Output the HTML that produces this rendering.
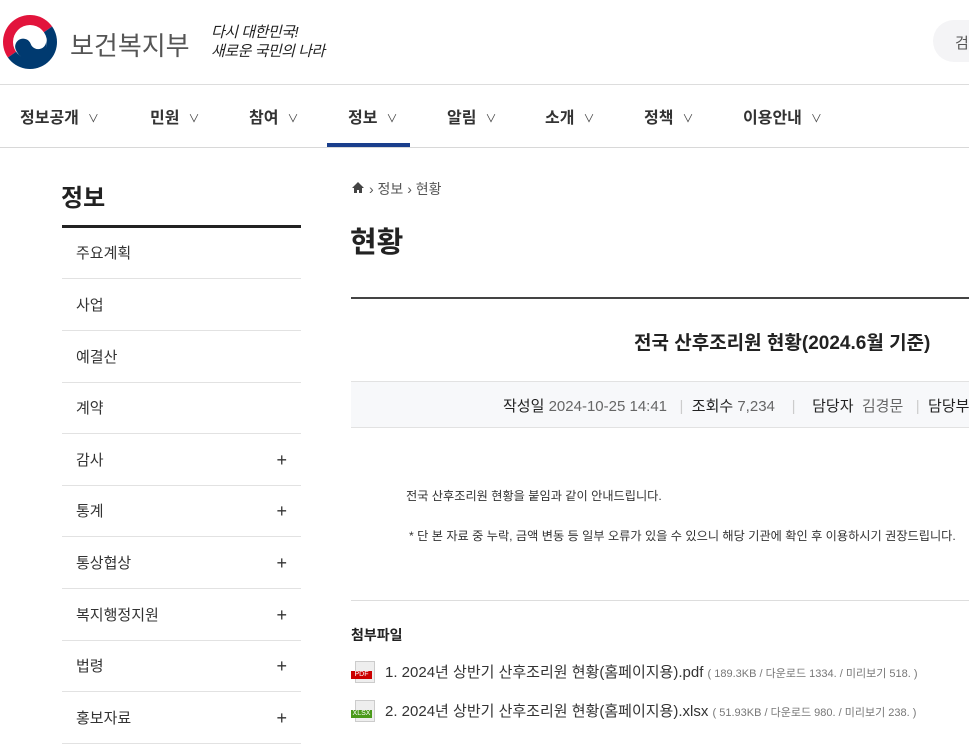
<!DOCTYPE html>
<html><head><meta charset="utf-8"><style>
*{margin:0;padding:0;box-sizing:border-box}
body{width:969px;height:739px;overflow:hidden;background:#fff;font-family:"Liberation Sans","Noto Sans CJK KR",sans-serif;color:#222;position:relative}
.a{position:absolute;white-space:nowrap}
.nav span{position:absolute;top:104px;font-size:16px;font-weight:bold;color:#333}
.nav i{font-style:normal;font-weight:normal;font-size:11px;margin-left:9px;color:#444;position:relative;top:-1px}
.side div{position:absolute;left:62px;width:239px;height:52px;border-bottom:1px solid #e2e2e2;font-size:15px;color:#333;padding:0 0 0 14px;line-height:53px}
.side b{position:absolute;right:14px;font-weight:normal;font-size:18px}
</style></head><body>
<svg class="a" style="left:2px;top:14px" width="56" height="56" viewBox="0 0 56 56">
<g transform="rotate(-35 28 28)">
<path d="M1 28A27 27 0 0 1 55 28Z" fill="#e2143c"/>
<path d="M1 28A27 27 0 0 0 55 28Z" fill="#003a70"/>
</g>
<circle cx="28" cy="28" r="17" fill="#fff"/>
<path d="M12 30A8 8 0 0 1 28 30A8 8 0 0 0 44 30A16 16 0 0 1 12 30Z" fill="#003a70" transform="rotate(-20 28 28)"/>
</svg>
<div class="a" style="left:70px;top:26px;font-size:26px;color:#555">보건복지부</div>
<div class="a" style="left:211px;top:23px;font-size:15px;font-style:italic;line-height:19px;color:#222;letter-spacing:-0.5px">다시 대한민국!<br>새로운 국민의 나라</div>
<div class="a" style="left:933px;top:20px;width:60px;height:42px;border-radius:21px;background:#f4f4f6;font-size:15px;color:#555;padding:12px 0 0 22px">검</div>
<div class="a" style="left:0;top:84px;width:969px;height:1px;background:#ddd"></div>
<div class="nav">
<span style="left:20px">정보공개<i>∨</i></span>
<span style="left:150px">민원<i>∨</i></span>
<span style="left:249px">참여<i>∨</i></span>
<span style="left:348px">정보<i>∨</i></span>
<span style="left:447px">알림<i>∨</i></span>
<span style="left:545px">소개<i>∨</i></span>
<span style="left:644px">정책<i>∨</i></span>
<span style="left:743px">이용안내<i>∨</i></span>
</div>
<div class="a" style="left:327px;top:143px;width:83px;height:4px;background:#1a3e8c"></div>
<div class="a" style="left:0;top:147px;width:969px;height:1px;background:#d8d8d8"></div>
<div class="a" style="left:61px;top:178px;font-size:24px;font-weight:bold">정보</div>
<div class="a" style="left:62px;top:225px;width:239px;height:3px;background:#222"></div>
<div class="side">
<div style="top:227px">주요계획</div>
<div style="top:279px">사업</div>
<div style="top:331px">예결산</div>
<div style="top:382px">계약</div>
<div style="top:434px">감사<b>+</b></div>
<div style="top:485px">통계<b>+</b></div>
<div style="top:537px">통상협상<b>+</b></div>
<div style="top:589px">복지행정지원<b>+</b></div>
<div style="top:640px">법령<b>+</b></div>
<div style="top:692px">홍보자료<b>+</b></div>
</div>
<svg class="a" style="left:351px;top:181px" width="14" height="13" viewBox="0 0 14 13"><path d="M7 1L1 7H3V12H6V9H8V12H11V7H13Z" fill="#444"/></svg>
<div class="a" style="left:369px;top:179px;font-size:14px;color:#555">› 정보 › 현황</div>
<div class="a" style="left:350px;top:219px;font-size:29px;font-weight:bold">현황</div>
<div class="a" style="left:351px;top:297px;width:618px;height:2px;background:#444"></div>
<div class="a" style="left:634px;top:328px;font-size:19px;font-weight:bold">전국 산후조리원 현황(2024.6월 기준)</div>
<div class="a" style="left:351px;top:381px;width:618px;height:47px;background:#f7f8fa;border-top:1px solid #e2e2e2;border-bottom:1px solid #e2e2e2"></div>
<div class="a" style="left:503px;top:395px;font-size:15px;color:#222">작성일 <span style="color:#666">2024-10-25 14:41</span> <span style="color:#ccc">&nbsp;&nbsp;|&nbsp;&nbsp;</span>조회수 <span style="color:#666">7,234</span> <span style="color:#ccc">&nbsp;&nbsp;&nbsp;|&nbsp;&nbsp;&nbsp;</span> 담당자 <span style="color:#666">&nbsp;김경문</span> <span style="color:#ccc">&nbsp;&nbsp;|&nbsp;</span> 담당부서</div>
<div class="a" style="left:406px;top:486px;font-size:12.2px;color:#333">전국 산후조리원 현황을 붙임과 같이 안내드립니다.</div>
<div class="a" style="left:409px;top:526px;font-size:12.2px;color:#333">* 단 본 자료 중 누락, 금액 변동 등 일부 오류가 있을 수 있으니 해당 기관에 확인 후 이용하시기 권장드립니다.</div>
<div class="a" style="left:351px;top:600px;width:618px;height:1px;background:#ddd"></div>
<div class="a" style="left:351px;top:625px;font-size:14px;font-weight:bold">첨부파일</div>
<div class="a" style="left:355px;top:661px;width:20px;height:22px;background:#eee;border:1px solid #ccc"></div>
<div class="a" style="left:351px;top:671px;width:21px;height:8px;background:#c00;color:#fff;font-size:7px;line-height:8px;text-align:center">PDF</div>
<div class="a" style="left:385px;top:661px;font-size:15px;color:#333">1. 2024년 상반기 산후조리원 현황(홈페이지용).pdf <span style="font-size:11px;color:#777">( 189.3KB / 다운로드 1334. / 미리보기 518. )</span></div>
<div class="a" style="left:355px;top:700px;width:20px;height:22px;background:#eee;border:1px solid #ccc"></div>
<div class="a" style="left:351px;top:710px;width:21px;height:8px;background:#4a9a1a;color:#fff;font-size:7px;line-height:8px;text-align:center">XLSX</div>
<div class="a" style="left:385px;top:700px;font-size:15px;color:#333">2. 2024년 상반기 산후조리원 현황(홈페이지용).xlsx <span style="font-size:11px;color:#777">( 51.93KB / 다운로드 980. / 미리보기 238. )</span></div>
</body></html>
